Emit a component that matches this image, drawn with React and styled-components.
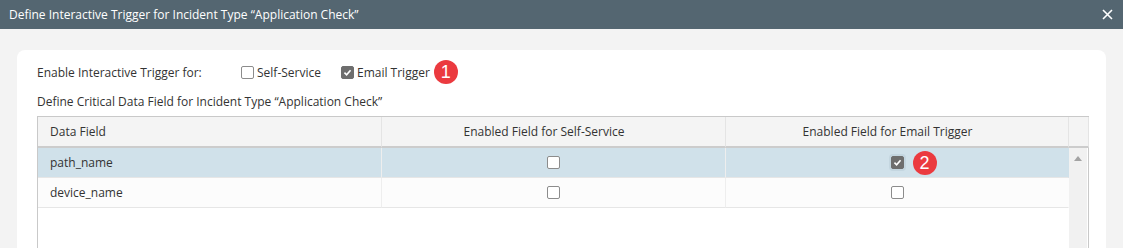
import React from 'react'
import styled, { createGlobalStyle } from 'styled-components'

const Global = createGlobalStyle`
  html, body { margin: 0; padding: 0; }
  body {
    background: #f3f3f3;
    font-family: "Open Sans", "Liberation Sans", sans-serif;
    font-size: 12px;
    color: #333;
    overflow: hidden;
  }
`

const Dialog = styled.div`
  width: 1123px;
  height: 248px;
  display: flex;
  flex-direction: column;
  overflow: hidden;
`

const TitleBar = styled.div`
  height: 29px;
  flex: none;
  background: #546671;
  color: #fff;
  display: flex;
  align-items: center;
  justify-content: space-between;
  padding: 0 10px 0 9px;
  font-size: 12px;
`

const Close = styled.svg`
  width: 11px;
  height: 11px;
  stroke: #fff;
  stroke-width: 1.6;
`

const Body = styled.div`
  flex: 1;
  padding: 21px 18px 0 17px;
  display: flex;
`

const Card = styled.div`
  flex: 1;
  background: #fff;
  border-radius: 8px 8px 0 0;
  padding: 12px 17px 0 20px;
  display: flex;
  flex-direction: column;
`

const OptionRow = styled.div`
  display: flex;
  align-items: center;
  height: 20px;
`

const Label = styled.span`
  width: 204px;
`

const Check = styled.label`
  display: inline-flex;
  align-items: center;
  gap: 3px;
  margin-right: ${p => p.gap || 0}px;
`

const Box = styled.span`
  width: 11px;
  height: 11px;
  border: 1px solid ${p => (p.checked ? '#6e6e6e' : '#8c8c8c')};
  background: ${p => (p.checked ? '#6e6e6e' : '#fff')};
  border-radius: 2px;
  display: inline-flex;
  align-items: center;
  justify-content: center;
  flex: none;
  position: relative;
  box-shadow: ${p => (p.focus ? '0 0 0 2px #c4d6e0' : 'none')};
  svg { width: 9px; height: 9px; }
`

const Badge = styled.span`
  width: 24px;
  height: 24px;
  border-radius: 50%;
  background: #eb3a3f;
  color: #fff;
  font-family: "Liberation Sans", Arial, sans-serif;
  font-size: 18px;
  display: inline-flex;
  align-items: center;
  justify-content: center;
  flex: none;
`

const FloatBadge = styled(Badge)`
  position: absolute;
  left: 21px;
  top: -6px;
`

const SubTitle = styled.div`
  margin-top: 9px;
  height: 20px;
  display: flex;
  align-items: center;
`

const Table = styled.div`
  margin-top: 5px;
  flex: 1;
  border: 1px solid #c9c9c9;
  border-bottom: none;
  display: grid;
  grid-template-columns: 344px 344px 343px 18px;
  grid-template-rows: 31px 30px 30px 1fr;
  width: 1050px;
`

const Head = styled.div`
  background: #f4f4f4;
  border-bottom: 2px solid #cccccc;
  border-right: 1px solid #e4e4e4;
  display: flex;
  align-items: center;
  justify-content: ${p => (p.left ? 'flex-start' : 'center')};
  padding: ${p => (p.left ? '0 0 0 12px' : '0 19px 0 0')};
  color: #333;
  &:last-child { border-right: none; padding: 0; }
`

const Cell = styled.div`
  background: ${p => (p.selected ? '#d0e1ea' : '#fcfcfc')};
  border-bottom: 1px solid #e6e6e6;
  border-right: 1px solid ${p => (p.last ? 'transparent' : '#eeeeee')};
  display: flex;
  align-items: center;
  justify-content: ${p => (p.left ? 'flex-start' : 'center')};
  padding-left: ${p => (p.left ? 12 : 0)}px;
`

const Scroll = styled.div`
  grid-column: 4;
  grid-row: 2 / span 3;
  background: #f1f1f1;
  display: flex;
  justify-content: center;
  padding-top: 8px;
  &::before {
    content: '';
    width: 0;
    height: 0;
    border-left: 4px solid transparent;
    border-right: 4px solid transparent;
    border-bottom: 5px solid #a3a3a3;
  }
`

const Empty = styled.div`
  grid-column: 1 / span 3;
  background: #fff;
`

const Tick = () => (
  <svg viewBox="0 0 10 10">
    <path d="M1.6 5.2 L4 7.6 L8.4 2.4" fill="none" stroke="#fff" strokeWidth="1.8" />
  </svg>
)

const CheckBox = ({ checked, focus, children }) => (
  <Box checked={checked} focus={focus}>
    {checked && <Tick />}
    {children}
  </Box>
)

const rows = [
  { name: 'path_name', self: false, email: true, selected: true },
  { name: 'device_name', self: false, email: false }
]

export default function App () {
  return (
    <Dialog>
      <Global />
      <TitleBar>
        <span>Define Interactive Trigger for Incident Type “Application Check”</span>
        <Close viewBox="0 0 11 11">
          <path d="M1 1 L10 10 M10 1 L1 10" />
        </Close>
      </TitleBar>
      <Body>
        <Card>
          <OptionRow>
            <Label>Enable Interactive Trigger for:</Label>
            <Check gap={20}>
              <CheckBox />
              Self-Service
            </Check>
            <Check gap={4}>
              <CheckBox checked />
              Email Trigger
            </Check>
            <Badge>1</Badge>
          </OptionRow>
          <SubTitle>Define Critical Data Field for Incident Type “Application Check”</SubTitle>
          <Table>
            <Head left>Data Field</Head>
            <Head>Enabled Field for Self-Service</Head>
            <Head>Enabled Field for Email Trigger</Head>
            <Head />
            {rows.map(r => (
              <React.Fragment key={r.name}>
                <Cell left selected={r.selected}>{r.name}</Cell>
                <Cell selected={r.selected}><CheckBox checked={r.self} /></Cell>
                <Cell selected={r.selected} last>
                  <CheckBox checked={r.email} focus={r.selected}>
                    {r.selected && <FloatBadge>2</FloatBadge>}
                  </CheckBox>
                </Cell>
              </React.Fragment>
            ))}
            <Scroll />
            <Empty />
          </Table>
        </Card>
      </Body>
    </Dialog>
  )
}
